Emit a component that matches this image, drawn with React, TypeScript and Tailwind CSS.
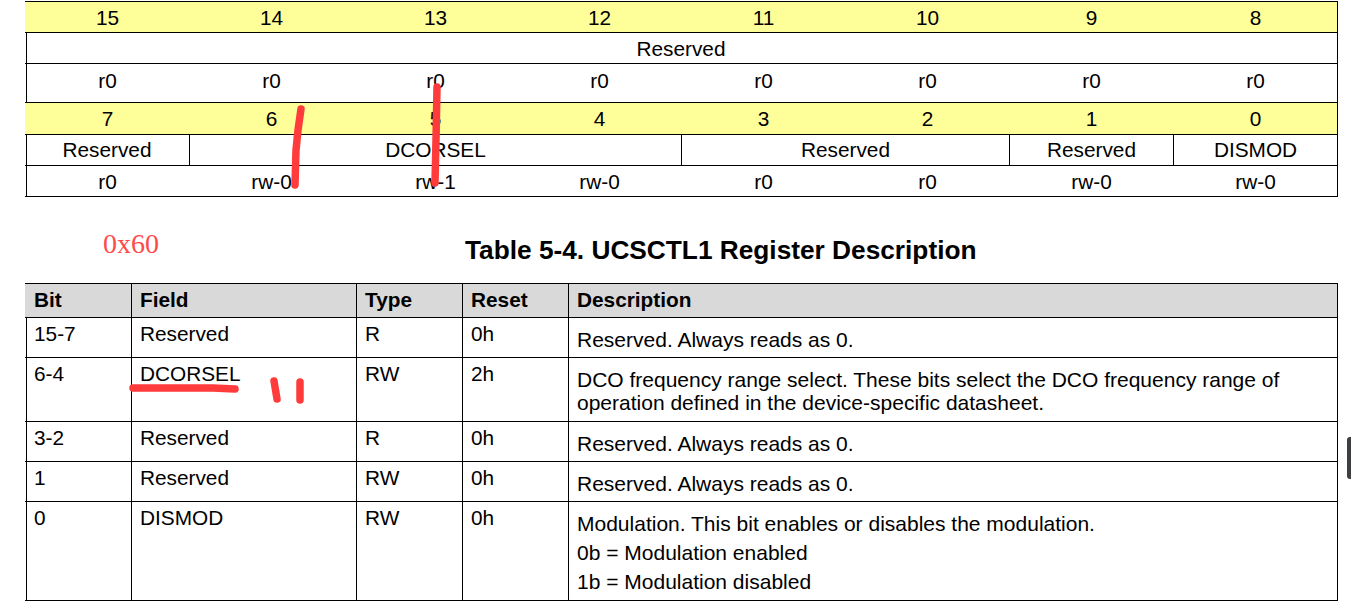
const bitsHigh = ["15", "14", "13", "12", "11", "10", "9", "8"];
const bitsLow = ["7", "6", "5", "4", "3", "2", "1", "0"];
const accessHigh = ["r0", "r0", "r0", "r0", "r0", "r0", "r0", "r0"];
const accessLow = ["r0", "rw-0", "rw-1", "rw-0", "r0", "r0", "rw-0", "rw-0"];

const fields = [
  { name: "Reserved", span: "col-span-1" },
  { name: "DCORSEL", span: "col-span-3" },
  { name: "Reserved", span: "col-span-2" },
  { name: "Reserved", span: "col-span-1" },
  { name: "DISMOD", span: "col-span-1" },
];

const columns = "grid grid-cols-[106px_225px_106px_106px_1fr]";

const rows = [
  { bit: "15-7", field: "Reserved", type: "R", reset: "0h", height: "h-[40px]", desc: ["Reserved. Always reads as 0."] },
  { bit: "6-4", field: "DCORSEL", type: "RW", reset: "2h", height: "h-[64px]", desc: ["DCO frequency range select. These bits select the DCO frequency range of", "operation defined in the device-specific datasheet."] },
  { bit: "3-2", field: "Reserved", type: "R", reset: "0h", height: "h-[40px]", desc: ["Reserved. Always reads as 0."] },
  { bit: "1", field: "Reserved", type: "RW", reset: "0h", height: "h-[40px]", desc: ["Reserved. Always reads as 0."] },
];

const BitRow = ({ cells, className }: { cells: string[]; className: string }) => (
  <div className={`grid grid-cols-8 -ml-[2px] border-t border-black ${className}`}>
    {cells.map((c, i) => (
      <div key={i} className="flex items-center justify-center pl-[1px]">{c}</div>
    ))}
  </div>
);

const App = () => {
  return (
    <div className="relative w-[1351px] h-[613px] overflow-hidden bg-white text-black text-[20.8px] leading-[23px] font-['Liberation_Sans',Arial,sans-serif]">
      <div className="pt-px pl-[26px] w-[1338px]">
        {/* Register bit map */}
        <div className="border-l border-r border-black">
          <BitRow cells={bitsHigh} className="h-[31px] bg-[#ffff99]" />
          <div className="-ml-[2px] h-[31px] border-t border-black flex items-center justify-center">Reserved</div>
          <BitRow cells={accessHigh} className="h-[39px] pb-[6px]" />
          <BitRow cells={bitsLow} className="h-[32px] bg-[#ffff99]" />
          <div className="grid grid-cols-8 -ml-[2px] h-[31px] border-t border-black">
            {fields.map((f, i) => (
              <div key={i} className={`${f.span} flex items-center justify-center pb-[2px] ${i > 0 ? "border-l border-black" : ""}`}>
                {f.name}
              </div>
            ))}
          </div>
          <BitRow cells={accessLow} className="h-[31px]" />
          <div className="-ml-[2px] h-px bg-black" />
        </div>

        {/* Table title */}
        <div className="flex items-center h-[86px] pt-[20px]">
          <span className="ml-[77px] mb-[14px] w-[362px] text-[#ff4a4a] text-[28px] font-['Liberation_Serif',serif]">0x60</span>
          <span className="text-[26.25px] font-bold whitespace-nowrap">Table 5-4. UCSCTL1 Register Description</span>
        </div>

        {/* Register description */}
        <div className="border-l border-r border-black">
          <div className={`${columns} -ml-[2px] h-[34px] border-t border-black bg-[#d9d9d9] font-bold`}>
            {["Bit", "Field", "Type", "Reset", "Description"].map((h, i) => (
              <div key={h} className={`pt-[4px] ${i > 0 ? "pl-[8px] border-l border-black" : "pl-[9px]"}`}>{h}</div>
            ))}
          </div>
          {rows.map((r) => (
            <div key={r.bit} className={`${columns} -ml-[2px] ${r.height} border-t border-black`}>
              <div className="pl-[9px] pt-[4px]">{r.bit}</div>
              <div className="pl-[8px] pt-[4px] border-l border-black">{r.field}</div>
              <div className="pl-[8px] pt-[4px] border-l border-black">{r.type}</div>
              <div className="pl-[8px] pt-[4px] border-l border-black">{r.reset}</div>
              <div className="pl-[8px] pt-[10px] border-l border-black text-[21px]">
                {r.desc.map((d) => (
                  <div key={d}>{d}</div>
                ))}
              </div>
            </div>
          ))}
          <div className={`${columns} -ml-[2px] h-[99px] border-t border-black`}>
            <div className="pl-[9px] pt-[4px]">0</div>
            <div className="pl-[8px] pt-[4px] border-l border-black">DISMOD</div>
            <div className="pl-[8px] pt-[4px] border-l border-black">RW</div>
            <div className="pl-[8px] pt-[4px] border-l border-black">0h</div>
            <div className="pl-[8px] pt-[10px] flex flex-col gap-[6px] border-l border-black text-[21px]">
              <div>Modulation. This bit enables or disables the modulation.</div>
              <div>0b = Modulation enabled</div>
              <div>1b = Modulation disabled</div>
            </div>
          </div>
          <div className="-ml-[2px] h-px bg-black" />
        </div>
      </div>

      {/* Hand-drawn annotations */}
      <svg className="absolute inset-0 pointer-events-none" width="1351" height="613" fill="none" stroke="#ff3b3b" strokeLinecap="round" strokeLinejoin="round">
        <path d="M301 109 L298 130 L296 150 L295 185" strokeWidth="7.5" />
        <path d="M437 87 L436 140 L435 183" strokeWidth="7.5" />
        <path d="M133 388 L213 388 L235 389" strokeWidth="7.5" />
        <path d="M274 381 L277 399" strokeWidth="7.5" />
        <path d="M300 382 L300 400" strokeWidth="7.5" />
      </svg>

      {/* Scrollbar thumb */}
      <div className="absolute left-[1347px] top-[437px] w-[4px] h-[42px] rounded-l-[3px] bg-[#3c4043]" />
    </div>
  );
};

export default App;
